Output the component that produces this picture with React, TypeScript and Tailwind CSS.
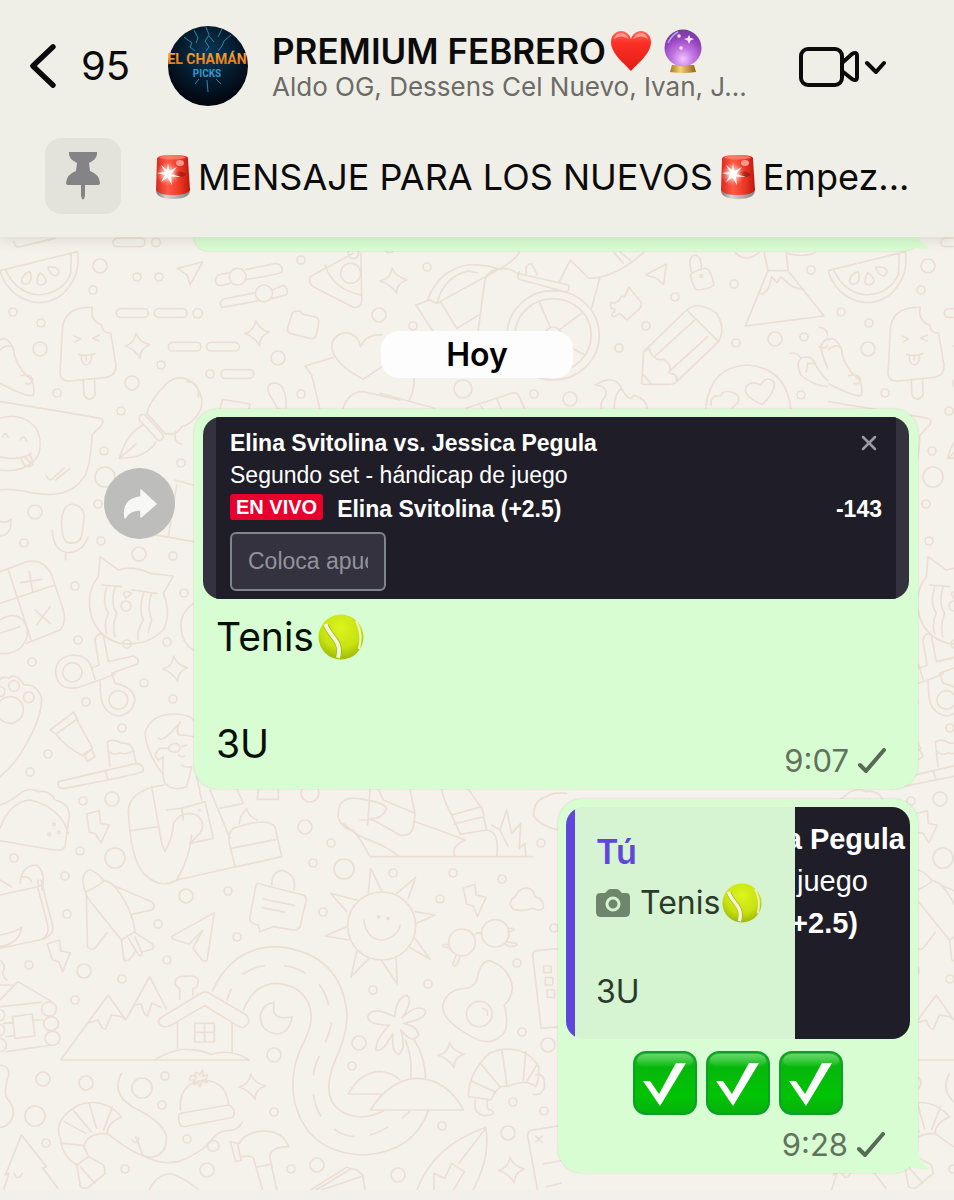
import React from "react";

type Doodle = { at: string; stroke: number; d: string[] };

const star = (x: number, y: number) =>
  `M${x - 4} ${y - 38}Q${x + 6} ${y - 10} ${x + 37} ${y - 3}Q${x + 8} ${y + 8} ${x + 8} ${y + 38}Q${x - 8} ${y + 10} ${x - 37} ${y + 1}Q${x - 8} ${y - 6} ${x - 4} ${y - 38}Z`;
const pill = (x: number, y: number, w: number) =>
  `M${x + 12} ${y - 13}h${w - 24}a13 13 0 0 1 0 26h${24 - w}a13 13 0 0 1 0 -26Z`;
const ring = (x: number, y: number, rx: number, ry: number = rx) =>
  `M${x - rx} ${y}a${rx} ${ry} 0 1 0 ${2 * rx} 0a${rx} ${ry} 0 1 0 ${-2 * rx} 0Z`;

const dots: [number, number, number][] = [
  [100, 266, 7], [137, 277, 4], [159, 277, 4], [93, 290, 4], [13, 312, 4], [41, 323, 4], [40, 349, 7],
  [301, 260, 4], [379, 315, 7], [278, 358, 7], [161, 365, 4], [132, 383, 7], [57, 393, 4], [210, 374, 4],
  [301, 394, 4], [121, 411, 4], [104, 451, 4], [181, 463, 4], [105, 477, 10], [98, 504, 4],
  [35, 512, 7], [24, 543, 4], [101, 541, 4], [139, 554, 7], [173, 556, 4], [75, 586, 4], [184, 593, 4],
  [78, 640, 4], [127, 644, 4], [167, 642, 4], [32, 662, 4], [144, 683, 4], [86, 702, 4], [173, 699, 4],
  [122, 728, 4], [48, 754, 4], [30, 772, 4], [83, 801, 4], [112, 799, 7], [80, 851, 4], [115, 858, 10],
  [14, 858, 4], [65, 876, 4], [310, 793, 9], [305, 827, 7], [331, 843, 4], [313, 863, 4], [344, 869, 10],
  [186, 896, 7], [228, 891, 4], [237, 937, 4], [323, 912, 4], [393, 873, 4], [453, 873, 4], [440, 899, 4],
  [502, 879, 4], [541, 843, 4], [373, 990, 4], [428, 984, 4], [517, 963, 4], [554, 928, 4], [67, 914, 4],
  [158, 924, 4], [167, 960, 4], [84, 971, 7], [122, 979, 4], [29, 965, 4], [75, 1000, 4], [274, 1055, 7],
  [165, 1076, 4], [162, 1105, 4], [142, 1088, 10], [86, 1083, 7], [43, 1079, 7], [35, 1116, 10],
  [46, 1143, 4], [187, 1139, 4], [125, 1169, 4], [207, 1170, 7], [274, 1112, 4], [291, 1169, 4],
  [317, 1165, 7], [398, 1175, 7], [352, 1066, 4], [359, 1043, 7], [442, 1126, 4], [513, 1102, 4],
  [544, 1111, 4], [508, 1133, 7], [548, 1045, 7], [522, 1032, 4], [427, 267, 4], [413, 326, 4],
  [463, 389, 9], [534, 394, 4], [570, 399, 7], [619, 348, 4], [646, 326, 4], [675, 297, 4],
  [734, 284, 4], [811, 270, 4], [736, 343, 4], [775, 339, 7], [804, 337, 4], [801, 395, 4],
];

const doodles: Doodle[] = [
  {
    at: "translate(0 240) scale(.33333)",
    stroke: 5,
    d: [
      "M0 92L232 35Q244 110 185 165Q120 210 50 165Q12 135 0 92ZM16 89Q50 160 115 165Q190 160 212 100L214 40",
      "M64 122Q70 100 90 95Q98 115 88 128Q70 140 64 122ZM120 98Q108 115 112 130Q125 142 138 125Q138 110 120 98ZM143 82Q150 106 168 108Q185 95 170 85Q158 78 143 82Z",
      "M532 85L608 66L570 135L562 105Z",
      "M688 98L655 105Q640 120 652 135Q660 140 690 130M738 88L830 70Q850 76 846 95Q842 103 740 118M713 85a25 25 0 1 0 .1 0Z",
      "M768 158L670 177Q654 190 666 202L772 183M816 150L850 136Q866 145 860 164L815 176M792 135a25 25 0 1 0 .1 0Z",
      "M1083 40L1085 185Q1080 205 1060 202L940 140Q925 130 930 110L1060 40M1085 165Q1000 150 975 75M1052 70a30 30 0 1 0 .1 0Z",
      "M875 225L880 215L900 213L907 222L950 232Q960 240 956 250L948 290Q940 298 930 295L870 280Q860 275 863 265Z",
      star(412, 317), star(771, 279),
      pill(340, 7, 94), pill(350, 219, 94), pill(464, 219, 96), pill(506, 320, 96), pill(621, 320, 96), pill(664, 402, 96),
      ring(468, 7, 13), ring(593, 220, 14), ring(1060, 40, 16), ring(1168, 22, 16),
      "M40 5L50 22L165-5",
      "M277 202Q190 200 187 270L180 400Q182 425 210 423L320 412Q350 405 348 375L332 280Q308 280 305 255Q268 240 277 202ZM250 422L252 465Q268 490 285 465L284 420",
      "M222 288L242 296L224 306M298 285L278 295L298 303M236 343Q260 350 284 341M244 345V360Q259 390 274 360V344M259 345V360",
      "M0 300Q20 285 40 325Q45 380 95 420Q105 440 100 465Q85 475 0 430M62 407Q90 400 98 418Q95 435 78 430M0 330Q20 310 38 322",
      "M0 485Q100 500 300 535Q315 540 305 555L276 585Q270 700 245 720Q200 780 90 757Q30 745 0 750",
      "M0 535Q60 515 105 560Q130 600 115 645Q80 700 0 690M8 590Q15 570 24 592M60 600Q70 580 80 603M0 650Q55 665 95 640M64 657Q75 690 98 675Q100 660 88 642M76 652L90 667",
      "M138 705Q145 722 155 718L192 684M167 720L210 686",
      "M500 430Q535 400 575 425Q610 455 605 500Q585 550 545 560Q530 590 495 580L440 520Q450 480 500 430ZM560 425Q600 425 595 470M418 540Q415 520 435 525L488 582Q495 600 475 602ZM430 555Q380 580 358 655Q440 655 468 605M362 652L408 612M527 575Q520 610 545 612",
      "M660 508L668 478L750 492L746 508M812 432Q795 440 812 470L835 508H858Q860 450 840 434Q825 425 812 432",
      "M915 378L1000 352M915 378L935 405L960 508M1090 418Q1000 370 995 320Q1000 280 1040 278Q1075 285 1082 320Q1100 280 1145 285M1090 418L1145 380M1028 508Q1045 455 1090 455L1200 480",
      "M185 830V840Q190 790 220 793Q255 800 252 835L245 890Q235 915 205 908Q182 900 185 830M157 870Q160 935 205 938Q250 935 264 892M197 938V960",
      "M0 845Q25 850 33 838Q35 885 0 888",
      "M0 995L80 965Q130 955 155 1005L190 1110Q200 1150 180 1170L80 1210M25 990L95 1205M0 1090L165 1035M62 1028L125 1018M88 995L98 1055M105 1110L150 1150M150 1100L110 1155",
      "M0 1140Q50 1110 75 1150Q95 1190 60 1225Q30 1245 0 1240M0 1180L60 1160",
      "M270 1110Q262 1050 295 1010L300 950L355 990Q400 975 450 1000L520 1008L490 1060Q515 1120 490 1170Q440 1220 360 1210Q285 1190 270 1110ZM305 1035L365 1040M395 1050L470 1060M320 1040Q305 1090 325 1120Q310 1150 320 1180M345 1042Q330 1090 350 1120Q335 1160 345 1190M430 1060Q415 1110 430 1140Q410 1170 415 1200M455 1060Q440 1100 455 1140Q445 1170 445 1180M378 1075L395 1060Q380 1050 370 1060Z",
      ring(378, 1098, 15), "M525 720L580 735M530 735L505 890M440 880L580 905",
      "M580 1090Q540 1120 543 1160Q545 1210 580 1230",
    ],
  },
  {
    at: "translate(0 590) scale(.33333)",
    stroke: 5,
    d: [
      "M285 150Q290 125 310 135L325 215L400 198Q422 208 412 222L335 250L345 280Q400 290 405 330Q395 375 355 378Q305 370 302 310L300 270L235 292Q175 305 167 250Q165 205 215 195Q265 195 275 235L297 225ZM275 235L285 268M300 270L345 252",
      ring(217, 247, 29), ring(355, 330, 28), star(525, 236),
      "M0 270Q10 255 25 265Q50 245 72 285Q110 280 125 325Q125 380 85 450Q50 520 0 560",
      ring(42, 288, 16), ring(86, 322, 16), ring(30, 360, 40), ring(0, 305, 15),
      "M150 420L222 366L234 395L278 475L252 498Q200 475 168 432M150 420L168 432L234 385M252 492L275 478L285 500L262 515Z",
      "M175 575L410 520Q435 525 428 545Q420 552 190 596Q170 595 175 575ZM316 543L324 568M330 530L322 455Q345 445 365 460Q390 455 400 480L408 520M326 485Q345 500 360 488Q380 495 398 484",
      "M490 555Q440 490 435 430Q450 370 530 372Q575 375 585 395M475 445Q490 455 520 420Q540 400 540 395Q520 440 550 435L580 440M480 475H505Q510 460 530 460Q545 470 535 485Q510 490 505 475M545 470L560 465M480 475Q455 495 475 510L490 500Q485 560 495 580Q520 605 560 590L575 530Q555 535 545 525M535 495Q545 505 555 497",
      "M490 585Q390 600 385 660Q390 800 430 850Q480 900 530 870Q570 800 575 735M455 590L485 760L495 785Q520 740 520 700Q545 660 590 675Q620 700 600 730L570 760L640 745L615 635L545 655L550 690M590 560L605 630M500 660L540 655M390 722L475 710M530 870L845 800L825 710Q800 680 700 715Q680 730 690 770L705 828M630 600L690 745M695 775L830 748M660 655L730 640L710 595M718 700L722 680L740 655Q745 680 772 690",
      "M0 645Q40 630 60 610Q90 590 115 605Q150 600 165 630Q210 640 208 680Q200 730 195 770Q185 785 160 780L0 752M0 715Q30 635 90 630Q180 650 205 730",
      ring(162, 703, 4), ring(177, 727, 4), ring(148, 733, 4), ring(598, 660, 2),
      "M260 672L298 662L301 700L328 705L303 758L285 730L268 727Z",
      "M60 880Q65 825 110 825Q140 850 125 900M0 870L35 890M65 860Q90 860 95 875M775 600L772 628H835V600",
    ],
  },
  {
    at: "translate(180 780) scale(.33333)",
    stroke: 5,
    d: [
      "M475 110Q470 50 530 55Q610 65 620 85Q605 120 570 115M475 115Q490 150 520 150Q550 190 570 230H1058M490 130Q530 170 580 185Q620 200 655 228M570 28L563 135M540 120H580L660 165Q695 170 700 140L705 100L610 60L595 28M690 28L705 100M705 125Q780 150 855 180Q810 200 825 230M785 28Q790 60 815 105L840 160M865 28L905 85M815 105L905 80L912 110L822 132M910 110L920 150L840 163M920 150Q960 155 950 230M935 135L960 150L980 90L995 160L1022 130L1018 205L1035 190L1037 228M960 150Q980 190 984 200",
      "M228 315Q235 305 250 315L370 345Q382 350 378 365L360 440Q350 455 330 448L280 440L240 455L235 435Q205 430 210 410ZM275 318Q275 270 310 272Q350 285 342 328M250 357L343 376M247 383L315 397",
      ring(605, 438, 102),
      "M552 420Q560 480 608 480Q655 470 660 435M565 340L572 265L605 333M650 340L707 292L685 355M500 395L452 340L530 360M500 440L435 468L505 480M530 515L513 590L565 538M605 542L652 612L648 530M685 500L750 538L705 475M705 395L765 405L710 430",
      ring(596, 410, 3), ring(624, 416, 3),
      "M850 325L885 313L888 345L918 352L892 410L880 378L860 372Z",
      "M1000 388Q980 365 1005 350Q1020 320 1045 325Q1065 330 1065 350Q1095 360 1090 385Q1075 395 1060 385Q1030 395 1000 388Z",
      ring(846, 487, 40), ring(946, 460, 41),
      "M886 462Q895 455 905 462M984 445H998Q1010 452 984 455M978 485L1008 490Q1018 500 990 500L975 493M805 495Q785 490 790 500L805 504M828 525L818 555Q830 565 840 530",
      "M1060 110Q1060 60 1100 50Q1120 35 1160 40M1060 105Q1080 140 1140 150",
    ],
  },
  {
    at: "translate(0 880) scale(.35714 .33333)",
    stroke: 4.8,
    d: [
      "M0 45L105 20L130 120Q145 170 110 180L0 205M115 0L148 140Q150 165 120 178M105 20L118 15M0 165Q35 160 60 143Q55 190 0 200M105 0L108 18",
      "M232 0Q235 50 265 80L340 180L378 155Q370 80 315 12L290 0Q240 -60 232 0M242 35Q290 10 290 0M315 15L425 65Q438 80 425 90L370 103M242 50L245 200Q258 215 268 202L300 158M340 180L347 240Q360 250 378 215M360 175L385 220Q395 235 398 220L378 170M378 158L425 190Q435 202 425 208L400 215",
      "M480 170L600 98L580 240Q570 250 562 235L540 205L568 150L530 192L485 178Z",
      "M132 192L167 180L170 213L197 218L175 275L165 245L147 240Z",
      "M170 540H697M170 540L303 345L352 420L419 290L466 387M250 428L275 420Q285 450 295 447L312 405L340 410L352 420M378 375L395 372Q405 410 413 408L425 370L450 382",
      "M455 410L560 342Q575 330 590 342L690 405Q705 425 685 440Q675 445 665 437L573 377L475 438Q455 445 445 430Q440 420 455 410ZM497 430V505M650 430V515M545 430H600V486H545ZM573 430V486M545 457H600M432 540Q490 505 520 508Q560 508 590 523Q650 505 697 540M503 358V325Q485 315 493 298Q500 288 520 289Q550 285 555 300Q555 325 540 325V345",
      "M595 333Q650 200 777 200Q960 220 972 410Q970 470 935 550Q900 650 950 690Q1000 730 1075 692M682 390Q710 310 777 310Q865 320 872 410Q870 450 840 510Q810 590 825 665Q860 820 1020 825Q1160 815 1200 690",
      "M680 282Q710 262 740 257M797 257Q830 262 855 280M895 315Q915 345 920 375M928 430Q922 460 912 485M893 530Q880 560 878 585M878 645Q882 680 898 708M937 748Q960 768 992 770M1037 765Q1065 755 1085 742M1127 713L1147 695M635 360L647 328",
      "M768 367Q755 425 818 410Q810 460 775 462Q725 455 730 400Q740 370 768 367Z",
      "M1105 410Q1110 355 1138 345Q1160 360 1125 415Q1165 370 1190 390Q1200 415 1130 430Q1170 440 1172 465Q1155 495 1122 450Q1138 500 1118 523Q1095 520 1100 460Q1070 520 1053 510Q1050 480 1090 435Q1030 435 1030 410Q1040 375 1105 410ZM1135 480Q1155 530 1150 595M1160 480Q1190 530 1192 597M1037 690H1298Q1250 595 1165 595Q1090 600 1037 690ZM975 642Q1010 575 1065 575Q1100 578 1120 600M975 642H1070",
      "M1335 300Q1345 240 1372 242Q1430 265 1435 325Q1430 360 1412 375Q1430 450 1400 470Q1370 500 1320 470Q1235 420 1240 375Q1250 330 1300 325Q1325 325 1335 300Z",
      ring(1342, 402, 36, 38), "M1352 385Q1368 390 1365 405", star(1263, 525), star(706, 620), star(1432, 870),
      "M1375 660Q1395 610 1420 620Q1470 595 1500 620Q1510 600 1508 560Q1490 525 1455 512Q1410 500 1370 520Q1310 580 1312 650ZM1345 550L1400 620M1405 508L1420 620M1472 515L1465 605M1505 550L1475 605M1320 603L1385 635M1500 585Q1525 575 1525 620Q1515 650 1493 643M1330 660Q1325 700 1355 707Q1395 705 1375 690Q1360 690 1365 660",
      "M505 690Q500 610 570 600Q635 605 640 675M500 710Q500 700 515 698L640 675Q655 680 656 700Q655 713 640 715L515 740Q500 740 500 710ZM530 600Q535 575 550 595Q540 565 560 585Q570 555 568 590Q590 575 575 598Q590 615 565 602Q560 635 555 605Q535 625 545 600Z",
      "M340 580Q310 640 370 680Q450 720 465 765Q470 820 430 830Q395 840 300 760Q300 730 340 710Q290 650 220 675Q145 720 170 780Q175 830 215 855L225 920Q240 930 250 920L295 880L290 855L248 830L235 800Q240 760 300 760M380 770L400 825Q440 855 500 845Q560 820 585 790Q610 750 640 752Q670 750 678 727M370 780a8 8 0 1 0 18-6M175 790L238 797M180 725L240 760M205 690L255 755M250 668L270 745M315 680L290 750M215 855L248 830M225 860L265 910",
      ring(597, 798, 16),
      "M645 785L660 845L675 840L665 790ZM670 790Q680 765 720 755Q790 745 808 800Q765 800 755 825L760 855L775 930M675 830Q705 825 710 835L735 930M718 862L758 853M870 930L970 862L1000 870L1015 885L1022 930M885 930L985 865M900 930L1010 890",
      "M418 930Q440 880 480 882Q510 890 557 930M1168 930Q1210 800 1360 742Q1375 830 1325 930M1215 930V880L1245 895L1265 850L1300 875L1270 930M1360 745L1285 850M1505 930L1478 770Q1475 755 1490 750L1570 737M1500 768L1518 786M1518 768L1500 786M1520 852L1570 842M1530 920L1570 910",
      "M10 930L25 880L15 885L60 765L130 860L120 865L162 925M40 880Q50 905 62 880M0 555Q35 560 20 600Q10 640 20 655Q55 700 20 735Q10 742 0 742",
      "M0 315H35M0 360L50 305L145 365M0 380L115 367",
      ring(137, 387, 21), ring(143, 431, 21), ring(147, 475, 21), ring(-5, 405, 18), ring(-5, 450, 18), ring(-2, 495, 20),
      "M18 515L140 496M35 410L90 402L98 468L42 475ZM10 430L35 428M92 420H120M18 470L40 467",
      "M1570 205L1500 212Q1490 215 1492 230L1515 445L1570 440M1522 258H1543V278H1522ZM1527 293H1548V315H1527ZM1532 330H1553V352H1532Z",
      "M0 240Q20 260 8 275Q5 290 20 300",
    ],
  },
  {
    at: "translate(380 240) scale(.36603 .33333)",
    stroke: 4.8,
    d: [
      "M130 180Q160 90 240 75Q290 72 325 88Q370 60 380 38M155 190Q175 110 240 93L265 98M98 195L135 180L155 190L325 88Q290 90 285 130L268 275M98 195L145 275M165 185L210 265L270 225M325 88Q350 80 375 100L515 135Q520 155 505 155L380 118Q372 110 380 95M400 100Q395 70 415 72L430 105M490 125L520 60L570 115Q640 115 720 38M600 115L578 205M640 38L665 70M655 35L685 62",
      ring(473, 286, 126, 134), ring(473, 286, 104, 110), ring(473, 285, 22, 24),
      "M435 185L465 262M550 220L490 270M500 310L560 345M440 400L465 315",
      star(37, 122),
      "M725 105L782 72L775 133L755 115Z",
      "M848 105Q850 95 890 85Q905 90 912 135Q900 148 865 150Q855 140 848 105ZM850 95Q840 45 862 45Q880 50 878 88",
      ring(878, 108, 4),
      "M680 142L712 185Q720 200 700 215L675 240L655 220Q630 240 635 220Q650 205 632 205Q625 180 640 190L655 180Q655 165 668 170Z",
      "M720 335L838 210Q870 180 920 220Q945 265 925 305L810 425Q805 433 790 433H720Q712 433 716 420ZM720 335L735 325Q745 365 775 358Q800 375 790 400Q815 400 810 425M750 350L860 240M838 210L925 305M790 395L895 290M720 405L742 433",
      "M998 258L1060 92H1115L1213 228ZM1035 160Q1060 170 1070 110L1085 128L1095 110L1115 130Q1130 145 1155 148M1050 38L1060 92M1110 38L1115 92M970 38Q1000 70 1035 38M1110 38Q1150 55 1190 38",
      "M890 505Q900 380 1005 375Q1110 385 1122 505M905 495Q900 465 930 468Q940 445 970 460Q995 480 960 505M1045 493Q990 470 1000 440Q1015 420 1040 435Q1055 405 1075 425Q1085 450 1045 493Z",
      "M1120 340Q1140 335 1150 355Q1180 340 1190 375Q1220 430 1250 440Q1190 445 1150 405Q1135 370 1150 355M1165 395L1168 370L1190 370M1200 262Q1225 265 1225 295Q1260 305 1262 350Q1270 390 1315 435Q1325 470 1310 472Q1220 420 1205 325Q1205 305 1225 295M1200 320L1215 325L1230 310L1245 325L1265 318",
      "M588 435Q640 400 660 445Q680 490 695 465Q730 480 730 505M590 435Q625 440 615 470Q600 490 605 505M640 505Q640 460 660 445M0 460L150 505M235 505L360 460Q375 455 380 470L395 505M270 490L280 505M320 478L330 505M90 375Q100 440 80 480",
    ],
  },
];

function DoodleTile() {
  return (
    <g id="doodle-tile">
      {doodles.map((group) => (
        <g key={group.at} transform={group.at} strokeWidth={group.stroke}>
          {group.d.map((d, i) => (
            <path key={i} d={d} />
          ))}
        </g>
      ))}
      {dots.map(([cx, cy, r], i) => (
        <circle key={i} cx={cx} cy={cy} r={r} strokeWidth={1.7} />
      ))}
    </g>
  );
}

function Wallpaper() {
  return (
    <svg
      aria-hidden="true"
      className="absolute inset-0 h-full w-full"
      viewBox="0 237 954 953"
      preserveAspectRatio="xMinYMin slice"
      fill="none"
      stroke="#ebdfd5"
      strokeLinecap="round"
      strokeLinejoin="round"
    >
      <defs>
        <clipPath id="tile-clip">
          <rect x="0" y="230" width="828" height="980" />
        </clipPath>
      </defs>
      <g clipPath="url(#tile-clip)">
        <DoodleTile />
      </g>
      <g transform="translate(828 0)" clipPath="url(#tile-clip)">
        <use href="#doodle-tile" />
      </g>
    </svg>
  );
}

function Siren() {
  return (
    <svg viewBox="0 0 36 46" className="inline-block h-[46px] w-9 shrink-0" role="img" aria-label="sirena">
      <defs>
        <linearGradient id="siren-red" x1="0" x2="1">
          <stop offset="0" stopColor="#d8281f" />
          <stop offset=".35" stopColor="#ff5a48" />
          <stop offset=".75" stopColor="#e8321f" />
          <stop offset="1" stopColor="#b81810" />
        </linearGradient>
        <linearGradient id="siren-base" x1="0" x2="1">
          <stop offset="0" stopColor="#77736f" />
          <stop offset=".3" stopColor="#d9d6d2" />
          <stop offset="1" stopColor="#86827f" />
        </linearGradient>
        <radialGradient id="siren-glow">
          <stop offset="0" stopColor="#fff" />
          <stop offset=".35" stopColor="#ffd9cf" stopOpacity=".85" />
          <stop offset="1" stopColor="#ff8a75" stopOpacity="0" />
        </radialGradient>
      </defs>
      <path d="M1 36Q1 45 18 45T35 36V34H1Z" fill="url(#siren-base)" />
      <path d="M2 5Q2 1 18 1T33 5L35 36Q33 41 18 41T1 36Z" fill="url(#siren-red)" />
      <path d="M4 4Q18 7 31 4Q30 1 18 1T4 4Z" fill="#ff8b78" opacity=".7" />
      <path d="M20 18Q28 16 31 21Q27 24 20 23Z" fill="#8f120c" opacity=".6" />
      <ellipse cx="25" cy="9" rx="4" ry="3" fill="#ffc3b8" opacity=".7" />
      <circle cx="13" cy="20" r="12" fill="url(#siren-glow)" />
      <path d="M13 9L14.500 17L22 13L16 20L26 23L16 22.500L17 31L12.500 23.500L6 28L10 21L2 19L10 18L6 11L12 16Z" fill="#fff" />
    </svg>
  );
}

function Heart() {
  return (
    <svg viewBox="0 0 42 42" className="size-[42px] shrink-0" role="img" aria-label="corazón rojo">
      <defs>
        <linearGradient id="heart-fill" x1="0" y1="0" x2="0" y2="1">
          <stop offset="0" stopColor="#ff6a5c" />
          <stop offset=".3" stopColor="#fb2f25" />
          <stop offset="1" stopColor="#e31d16" />
        </linearGradient>
      </defs>
      <path d="M21 41C15 34 1 24 1 12C1 5 6 1 11 1C16 1 20 5 21 9C22 5 26 1 31 1C36 1 41 5 41 12C41 24 27 34 21 41Z" fill="url(#heart-fill)" />
      <path d="M4 9Q6 3 11 3Q16 3 19 9Q11 4 4 9ZM23 9Q26 3 31 3Q36 3 38 9Q31 4 23 9Z" fill="#ffb0a5" opacity=".75" />
    </svg>
  );
}

function CrystalBall() {
  return (
    <svg viewBox="0 0 38 44" className="h-11 w-[38px] shrink-0" role="img" aria-label="bola de cristal">
      <defs>
        <radialGradient id="ball" cx=".5" cy=".8" r=".85">
          <stop offset="0" stopColor="#efc6ff" />
          <stop offset=".35" stopColor="#c172e2" />
          <stop offset=".75" stopColor="#8a3bb5" />
          <stop offset="1" stopColor="#6c4390" />
        </radialGradient>
        <linearGradient id="ball-base" x1="0" x2="1">
          <stop offset="0" stopColor="#a8761c" />
          <stop offset=".4" stopColor="#f4d46a" />
          <stop offset="1" stopColor="#94601a" />
        </linearGradient>
      </defs>
      <path d="M8 36H30L32 43Q19 45 6 43Z" fill="url(#ball-base)" />
      <circle cx="19" cy="19" r="18.500" fill="url(#ball)" />
      <path d="M25 6L26.500 9L30 10L26.500 11.500L25 15L23.500 11.500L20 10L23.500 9Z" fill="#fde9ff" />
      <circle cx="15" cy="7" r="1.800" fill="#fbe3ff" />
      <circle cx="17" cy="19" r="1.800" fill="#fbe3ff" />
      <path d="M4 14Q8 6 14 3" stroke="#b9a6e6" strokeWidth="1.500" fill="none" />
    </svg>
  );
}

function TennisBall({ className }: { className: string }) {
  return (
    <svg viewBox="0 0 46 46" className={className} role="img" aria-label="pelota de tenis">
      <defs>
        <radialGradient id="tennis" cx=".5" cy=".3" r=".75">
          <stop offset="0" stopColor="#dcf41f" />
          <stop offset=".6" stopColor="#c6e20f" />
          <stop offset="1" stopColor="#97b008" />
        </radialGradient>
      </defs>
      <circle cx="23" cy="23" r="22.500" fill="url(#tennis)" />
      <path d="M8 11C12 24 25 26 20 44" fill="none" stroke="#9fb412" strokeWidth="5.500" />
      <path d="M7.500 10C11 23 25 26 20 44" fill="none" stroke="#f3f5d8" strokeWidth="4" />
      <path d="M38 7Q45 20 41 35" fill="none" stroke="#eef2c8" strokeWidth="2.200" />
    </svg>
  );
}

function CheckEmoji() {
  return (
    <svg viewBox="0 0 64 64" className="size-16" role="img" aria-label="marca de verificación">
      <defs>
        <linearGradient id="check-bg" x1="0" y1="0" x2="0" y2="1">
          <stop offset="0" stopColor="#2fc234" />
          <stop offset=".25" stopColor="#06b70c" />
          <stop offset=".7" stopColor="#00c404" />
          <stop offset="1" stopColor="#08b00d" />
        </linearGradient>
        <linearGradient id="check-gloss" x1="0" y1="0" x2="0" y2="1">
          <stop offset="0" stopColor="#5fd863" />
          <stop offset="1" stopColor="#5fd863" stopOpacity="0" />
        </linearGradient>
      </defs>
      <rect x="1" y="1" width="62" height="62" rx="12" fill="url(#check-bg)" stroke="#0f9d2b" strokeWidth="2" />
      <rect x="4" y="3" width="56" height="13" rx="9" fill="url(#check-gloss)" />
      <path d="M10 30H17L26 43L43 12H53L27 55Z" fill="#fff" />
    </svg>
  );
}

function Tick() {
  return (
    <svg viewBox="0 0 30 26" className="h-[26px] w-[30px]" fill="none" stroke="#566b54" strokeWidth="4" strokeLinecap="round" strokeLinejoin="round" role="img" aria-label="Enviado">
      <path d="M3 17L9 23L27 2" />
    </svg>
  );
}

function Avatar() {
  return (
    <svg viewBox="0 0 80 80" className="size-20 shrink-0" role="img" aria-label="El Chamán Picks">
      <defs>
        <radialGradient id="night" cx=".5" cy=".35" r=".6">
          <stop offset="0" stopColor="#0d3853" />
          <stop offset=".55" stopColor="#061d30" />
          <stop offset="1" stopColor="#020812" />
        </radialGradient>
        <linearGradient id="fire" x1="0" y1="0" x2="0" y2="1">
          <stop offset="0" stopColor="#f9ae33" />
          <stop offset="1" stopColor="#e0701a" />
        </linearGradient>
      </defs>
      <circle cx="40" cy="40" r="40" fill="url(#night)" />
      <path d="M16 11L24 17L22 21L27 25M38 1L41 9L37 15L41 21L38 25M63 9L56 15L54 20L50 25M41 10L46 16M26 4L30 12L28 17M54 3L50 11M39 54L40 66M31 53L27 58M48 53L53 58" fill="none" stroke="#2d87ad" strokeWidth="1" />
      <text x="39" y="38" textAnchor="middle" fill="url(#fire)" className="font-['Roboto',sans-serif] text-[14px] font-bold">EL CHAMÁN</text>
      <text x="39" y="51" textAnchor="middle" fill="#3297cb" className="font-['Roboto',sans-serif] text-[10px] font-bold">PICKS</text>
    </svg>
  );
}

function Header() {
  return (
    <header className="relative z-10 bg-[#f0efe7] pb-[23px] shadow-[0_3px_12px_rgba(90,80,70,0.16)]">
      <div className="flex items-center pt-[26px] pr-[68px] pl-[29px]">
        <button type="button" aria-label="Atrás, 95 chats sin leer" className="flex w-[101px] items-center gap-[23px] text-[40px] leading-[48px] text-[#0b0b0b]">
          <svg viewBox="0 0 30 48" className="h-12 w-[30px]" fill="none" stroke="currentColor" strokeWidth="5.500" strokeLinecap="round" strokeLinejoin="round" aria-hidden="true">
            <path d="M25 4L4 24L25 44" />
          </svg>
          95
        </button>
        <div className="ml-[38px]"><Avatar /></div>
        <div className="ml-6 min-w-0 flex-1 pb-1">
          <h1 className="flex h-[46px] items-center whitespace-nowrap text-[35px] leading-[46px] font-semibold text-[#0b0b0b]">
            PREMIUM FEBRERO
            <span className="ml-1 flex items-center gap-3">
              <Heart />
              <CrystalBall />
            </span>
          </h1>
          <p className="text-[26px] leading-[26px] whitespace-nowrap text-[#6b6b67]">Aldo OG, Dessens Cel Nuevo, Ivan, J...</p>
        </div>
        <button type="button" aria-label="Videollamada" className="text-[#0b0b0b]">
          <svg viewBox="0 0 88 42" className="h-[42px] w-[88px]" fill="none" stroke="currentColor" strokeWidth="4" strokeLinecap="round" strokeLinejoin="round" aria-hidden="true">
            <rect x="3" y="4" width="41" height="36" rx="7" />
            <path d="M44 18L54 9Q59 6 59 11V32Q59 37 54 34L44 26M69 18L78 27L86 18" />
          </svg>
        </button>
      </div>
      <div className="mt-8 flex items-center pr-10 pl-[45px]">
        <span className="flex size-[76px] shrink-0 items-center justify-center rounded-2xl bg-[#e3e3dc]">
          <svg viewBox="0 0 34 48" className="h-12 w-[34px]" fill="#848487" role="img" aria-label="Mensaje fijado">
            <path d="M3 0H31Q32 7 23 11L24 19Q33 22 34 31Q34 33 31 33H19V44Q17 51 15 44V33H3Q0 33 0 31Q1 22 10 19L11 11Q2 7 3 0Z" />
          </svg>
        </span>
        <a href="#fijado" className="ml-[34px] flex items-center gap-[7px] pt-0.5 text-[36px] leading-[46px] whitespace-nowrap text-[#0b0b0b]">
          <Siren />
          <span>MENSAJE PARA LOS NUEVOS</span>
          <Siren />
          <span>Empez...</span>
        </a>
      </div>
    </header>
  );
}

function Tail() {
  return (
    <svg viewBox="0 0 34 40" className="absolute right-[-12px] bottom-0 h-10 w-[34px]" fill="#d8fdd2" aria-hidden="true">
      <path d="M0 0H22V14Q22 30 34 36Q22 38 12 32L0 38Z" />
    </svg>
  );
}

function BetSlip() {
  return (
    <div className="overflow-hidden rounded-[18px] bg-[#34323f] px-[13px]">
      <div className="bg-[#1f1e28] px-[14px] pt-3 pb-2 font-['Liberation_Sans',Arial,sans-serif] text-[23px] leading-8 text-white">
        <div className="flex items-center justify-between pr-[5px]">
          <h2 className="leading-7 font-bold">Elina Svitolina vs. Jessica Pegula</h2>
          <button type="button" aria-label="Quitar selección" className="text-[#9b9aa3]">
            <svg viewBox="0 0 16 16" className="size-4" stroke="currentColor" strokeWidth="2.500" strokeLinecap="round" aria-hidden="true">
              <path d="M2 2L14 14M14 2L2 14" />
            </svg>
          </button>
        </div>
        <p className="mt-0.5">Segundo set - hándicap de juego</p>
        <div className="mt-0.5 flex items-center font-bold">
          <span className="mb-1 rounded-[3px] bg-[#e8002d] px-1.5 text-[20px] leading-[26px]">EN VIVO</span>
          <span className="ml-[14px]">Elina Svitolina (+2.5)</span>
          <span className="ml-auto">-143</span>
        </div>
        <input
          aria-label="Coloca apuesta"
          placeholder="Coloca apuesta"
          className="mt-[7px] block h-[59px] w-[156px] rounded-md border-2 border-[#7f858d] bg-[#34323f] px-4 text-[23px] text-white placeholder:text-[#92929b]"
        />
      </div>
    </div>
  );
}

function Meta({ time }: { time: string }) {
  return (
    <div className="flex items-center justify-end gap-2 text-[31px] leading-9 text-[#61735f]">
      <time>{time}</time>
      <Tick />
    </div>
  );
}

const bubble = "bg-[#d8fdd2] shadow-[0_0_2px_rgba(120,150,110,0.35)]";

export default function App() {
  return (
    <div className="flex min-h-screen flex-col bg-[#f3f0eb] font-['Inter','Roboto',sans-serif]">
      <Header />
      <main className="relative flex grow flex-col overflow-hidden bg-[#f5f2eb]">
        <Wallpaper />
        <div className="relative flex flex-col pr-9 pb-4 pl-[104px]">
          <div className={`relative ml-[90px] h-[14px] rounded-b-[22px] ${bubble}`}>
            <svg viewBox="0 0 34 14" className="absolute right-[-12px] bottom-0 h-[14px] w-[34px]" fill="#d8fdd2" aria-hidden="true">
              <path d="M0 0H22Q26 7 34 11Q22 14 12 8L0 12Z" />
            </svg>
          </div>
          <div className="mt-20 mr-[-36px] ml-[-104px] flex justify-center">
            <span className="rounded-[18px] bg-[#fefdfd] px-[65px] text-[32px] leading-[47px] font-semibold text-black">Hoy</span>
          </div>

          <section className="mt-[31px] flex items-start gap-[19px]">
            <button type="button" aria-label="Reenviar" className="mt-[59px] flex size-[71px] shrink-0 items-center justify-center rounded-full bg-[#bdbdbc]">
              <svg viewBox="0 0 34 30" className="h-[30px] w-[34px]" fill="#f7f7f5" stroke="#f7f7f5" strokeWidth="1.500" strokeLinejoin="round" aria-hidden="true">
                <path d="M18 1L33 15L18 28V21Q7 20 2 29Q-1 10 18 8Z" />
              </svg>
            </button>
            <article className={`min-w-0 flex-1 rounded-[24px] px-[9px] pt-2 pb-2.5 ${bubble}`}>
              <BetSlip />
              <div className="pr-[22px] pl-[13px] text-[39px] leading-[53px] text-[#061006]">
                <p className="mt-[11px] flex items-center gap-1">
                  Tenis
                  <TennisBall className="size-[46px]" />
                </p>
                <div className="mt-[54px] flex h-[62px] justify-between">
                  <p>3U</p>
                  <div className="self-end">
                    <Meta time="9:07" />
                  </div>
                </div>
              </div>
            </article>
          </section>

          <article className={`relative mt-2.5 w-[360px] self-end rounded-[24px] px-2 pt-2 pb-[10px] ${bubble}`}>
            <Tail />
            <blockquote className="flex h-[232px] overflow-hidden rounded-[18px] bg-[#d6f4d1]">
              <div className="w-[9px] bg-[#5f46dd]" />
              <div className="flex-1 pt-[22px] pl-[21px] text-[32px] leading-[44px] text-[#2c3a2b]">
                <p className="text-[34px] leading-[46px] font-semibold text-[#5f46dd]">Tú</p>
                <p className="mt-1.5 flex items-center">
                  <svg viewBox="0 0 34 28" className="mr-2.5 h-7 w-[34px]" aria-hidden="true">
                    <path d="M5 4H9L12 1Q13 0 15 0H20Q22 0 23 1L26 4H30Q34 4 34 8V23Q34 28 29 28H5Q0 28 0 23V8Q0 4 5 4Z" fill="#6e866c" />
                    <circle cx="17" cy="15" r="6" fill="none" stroke="#d6f4d1" strokeWidth="3" />
                  </svg>
                  Tenis
                  <TennisBall className="ml-0.5 size-10" />
                </p>
                <p className="mt-[45px]">3U</p>
              </div>
              <div className="flex w-[115px] flex-col items-end overflow-hidden bg-[#1f1e28] pt-[11px] font-['Liberation_Sans',Arial,sans-serif] text-[29px] leading-[42px] whitespace-nowrap text-white">
                <span className="pr-[5px] font-bold">Jessica Pegula</span>
                <span className="pr-[42px]">de juego</span>
                <span className="pr-[52px] font-bold">(+2.5)</span>
              </div>
            </blockquote>
            <div className="mt-3 flex justify-center gap-[9px]">
              <CheckEmoji />
              <CheckEmoji />
              <CheckEmoji />
            </div>
            <div className="mt-3 pr-6">
              <Meta time="9:28" />
            </div>
          </article>
        </div>
      </main>
      <div className="h-2.5 bg-[#f3f0ec]" />
    </div>
  );
}
